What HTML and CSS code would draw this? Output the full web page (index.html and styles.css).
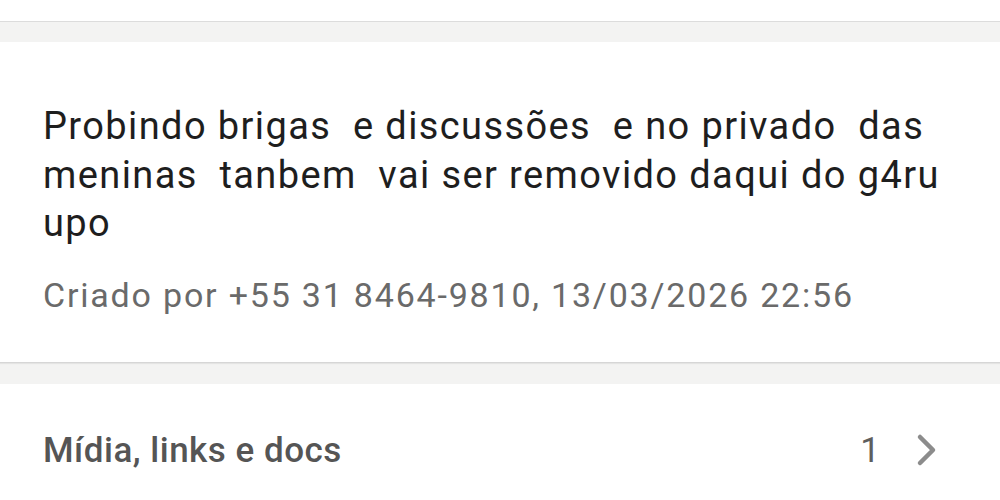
FILE: index.html
```html
<!DOCTYPE html>
<html lang="pt">
<head>
    <meta charset="UTF-8">
    <meta name="viewport" content="width=device-width, initial-scale=1.0">
    <title>Dados do grupo</title>
    <link rel="stylesheet" href="styles.css">
</head>
<body>

<div class="section top"></div>

<div class="section description">
    <p class="desc-text">Probindo brigas  e discussões  e no privado  das meninas  tanbem  vai ser removido daqui do g4ru upo</p>
    <p class="desc-meta">Criado por +55 31 8464-9810, 13/03/2026 22:56</p>
</div>

<div class="section media">
    <span class="media-label">Mídia, links e docs</span>
    <span class="media-count">1</span>
    <svg class="chevron" width="22" height="34" viewBox="0 0 22 34">
        <path d="M4 4 L17 17 L4 30" fill="none" stroke="#8c8c8c" stroke-width="4.5" stroke-linecap="round" stroke-linejoin="round"/>
    </svg>
</div>

</body>
</html>
```

FILE: styles.css
```css
body {
    margin: 0;
    background-color: #f3f3f2;
    font-family: Roboto, "Noto Sans", sans-serif;
    height: 500px;
    overflow: hidden;
}

.section {
    background-color: #ffffff;
}

.top {
    height: 21px;
    border-bottom: 1px solid #dcdcdc;
    margin-bottom: 20px;
}

.description {
    padding: 60px 30px 0 43px;
    height: 260px;
    border-bottom: 1px solid #d6d6d6;
    box-shadow: 0 1px 1px rgba(0, 0, 0, 0.06);
    margin-bottom: 21px;
}

.desc-text {
    margin: 0;
    font-size: 38px;
    line-height: 48.7px;
    letter-spacing: 1.4px;
    color: #1e1e1e;
    white-space: pre-wrap;
}

.desc-meta {
    margin: 27px 0 0 0;
    font-size: 34px;
    letter-spacing: 1.8px;
    color: #6a6a6a;
}

.media {
    display: flex;
    align-items: center;
    padding: 0 62px 0 43px;
    height: 132px;
}

.media-label {
    flex: 1;
    font-size: 35px;
    font-weight: 500;
    letter-spacing: 0.5px;
    color: #555555;
}

.media-count {
    font-size: 35px;
    color: #5e5e5e;
    margin-right: 36px;
}
```
